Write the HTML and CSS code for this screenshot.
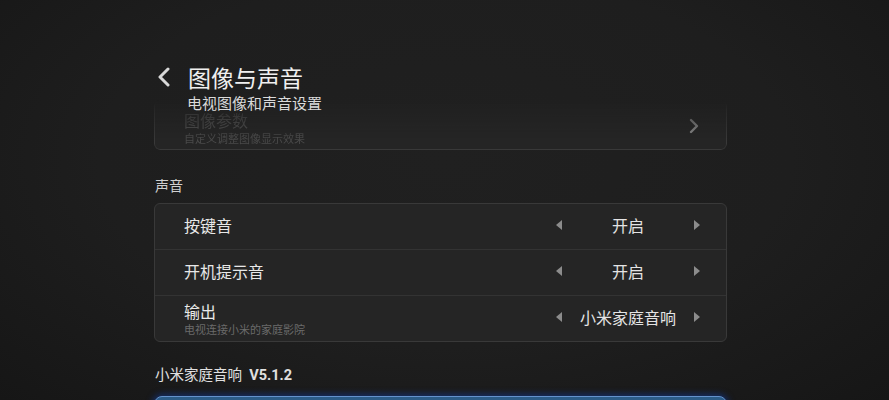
FILE: index.html
```html
<!DOCTYPE html>
<html lang="zh">
<head>
<meta charset="utf-8">
<link rel="stylesheet" href="styles.css">
</head>
<body>
<div class="page">
  <header class="header">
    <div class="title-row">
      <svg class="back" width="14" height="20" viewBox="0 0 14 20"><path d="M11 2 L3 10 L11 18" fill="none" stroke="#d8d8d8" stroke-width="3" stroke-linecap="round" stroke-linejoin="round"/></svg>
      <h1 class="title">图像与声音</h1>
    </div>
    <div class="subtitle">电视图像和声音设置</div>
  </header>

  <div class="card card-faded">
    <div class="row row-link">
      <div class="label-block">
        <div class="label">图像参数</div>
        <div class="sub">自定义调整图像显示效果</div>
      </div>
      <svg class="chev" width="12" height="16" viewBox="0 0 12 16"><path d="M3 2 L9 8 L3 14" fill="none" stroke="#8a8a8a" stroke-width="2.4" stroke-linecap="round" stroke-linejoin="round"/></svg>
    </div>
  </div>

  <div class="section-label">声音</div>

  <div class="card">
    <div class="row">
      <div class="label">按键音</div>
      <div class="picker"><span class="tri tri-l"></span><span class="value">开启</span><span class="tri tri-r"></span></div>
    </div>
    <div class="row">
      <div class="label">开机提示音</div>
      <div class="picker"><span class="tri tri-l"></span><span class="value">开启</span><span class="tri tri-r"></span></div>
    </div>
    <div class="row">
      <div class="label-block">
        <div class="label">输出</div>
        <div class="sub">电视连接小米的家庭影院</div>
      </div>
      <div class="picker"><span class="tri tri-l"></span><span class="value">小米家庭音响</span><span class="tri tri-r"></span></div>
    </div>
  </div>

  <div class="section-label version">小米家庭音响 <b>V5.1.2</b></div>

  <div class="card card-blue"></div>
</div>
</body>
</html>
```
FILE: styles.css
```css
html, body {
  margin: 0;
  padding: 0;
  height: 400px;
  overflow: hidden;
}
body {
  background: radial-gradient(ellipse at 50% 40%, #202020 0%, #1e1e1e 55%, #161616 100%);
  font-family: "Noto Sans CJK SC", "Noto Sans", sans-serif;
  color: #e6e6e6;
}
.page {
  width: 573px;
  padding: 63px 0 0 154px;
  display: flex;
  flex-direction: column;
}
.header {
  position: relative;
  z-index: 2;
}
.title-row {
  display: flex;
  align-items: center;
  height: 28px;
}
.back {
  margin-left: 3px;
  margin-right: 17px;
}
.title {
  margin: 0;
  font-size: 23px;
  font-weight: 400;
  line-height: 28px;
  color: #f0f0f0;
}
.subtitle {
  margin-left: 33px;
  margin-top: 3px;
  font-size: 15px;
  line-height: 18px;
  color: #dadada;
}
.card {
  background: #252525;
  border: 1px solid #393939;
  border-radius: 6px;
  box-sizing: border-box;
}
.card-faded {
  margin-top: -12px;
  height: 50px;
  -webkit-mask-image: linear-gradient(to bottom, transparent 0, rgba(0,0,0,.4) 12px, #000 40px);
  mask-image: linear-gradient(to bottom, transparent 0, rgba(0,0,0,.4) 12px, #000 40px);
}
.card-faded .row {
  height: 48px;
  padding-top: 5px;
  padding-bottom: 0;
  box-sizing: border-box;
  border: none;
}
.card-faded .label {
  color: #505050;
  line-height: 17px;
}
.card-faded .sub {
  color: #4a4a4a;
}
.row-link {
  padding-right: 22px;
}
.chev {
  margin-top: 0;
}
.row {
  display: flex;
  align-items: center;
  justify-content: space-between;
  height: 46px;
  padding-left: 29px;
  padding-right: 26px;
  padding-bottom: 4px;
  border-top: 1px solid #333;
  box-sizing: border-box;
}
.card > .row:first-child {
  border-top: none;
  height: 45px;
}
.label {
  font-size: 16px;
  line-height: 20px;
  color: #e8e8e8;
}
.label-block {
  display: flex;
  flex-direction: column;
  padding-top: 5px;
}
.label-block .label {
  line-height: 19px;
}
.sub {
  font-size: 11px;
  line-height: 16px;
  color: #6a6a6a;
}
.picker {
  display: flex;
  align-items: center;
}
.value {
  width: 132px;
  text-align: center;
  font-size: 16px;
  line-height: 20px;
  color: #e4e4e4;
}
.tri {
  width: 0;
  height: 0;
  border-top: 5px solid transparent;
  border-bottom: 5px solid transparent;
}
.tri-l {
  border-right: 6px solid #8c8c8c;
}
.tri-r {
  border-left: 6px solid #8c8c8c;
}
.section-label {
  font-size: 14px;
  line-height: 20px;
  color: #d0d0d0;
  margin: 25px 0 8px 1px;
}
.version {
  font-size: 14.5px;
  margin: 22px 0 10px 1px;
  color: #e0e0e0;
}
.version b {
  font-family: "Roboto", "Noto Sans", sans-serif;
  font-weight: 700;
  margin-left: 4px;
}
.card-blue {
  height: 40px;
  background: #2c5c88;
  border: 1px solid #6492cc;
  border-radius: 8px;
  box-shadow: 0 0 6px 2px rgba(20, 50, 120, 0.8);
}
```
